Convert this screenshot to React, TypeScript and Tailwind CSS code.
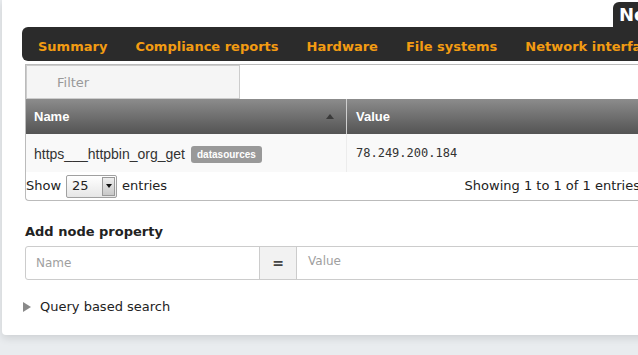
const tabs = ['Summary', 'Compliance reports', 'Hardware', 'File systems', 'Network interfaces', 'Software'];

function SortUp() {
  return (
    <svg width="8" height="5" viewBox="0 0 8 5" className="block">
      <polygon points="4,0 8,5 0,5" fill="#3a3a3a" />
    </svg>
  );
}

function PageSelect() {
  return (
    <div className="flex items-center h-[23px] w-[51px] border border-[#a0a0a0] bg-linear-to-b from-white to-[#e6e6e6] rounded-[2px]">
      <span className="pl-[5px] text-[13px] text-[#222] flex-1">25</span>
      <div className="w-[13px] h-[19px] mr-[1px] bg-linear-to-b from-[#eee] to-[#c8c8c8] border border-[#999] flex items-center justify-center">
        <svg width="6" height="4" viewBox="0 0 6 4">
          <polygon points="0,0 6,0 3,4" fill="#111" />
        </svg>
      </div>
    </div>
  );
}

export default function App() {
  return (
    <div className="w-[638px] h-[355px] overflow-hidden bg-[#e9ecef] font-['DejaVu_Sans',sans-serif] text-[#333]">
      <div className="ml-[2px] w-[900px] h-[335px] bg-white rounded-bl-[4px] shadow-[0_3px_8px_rgba(0,0,0,0.12)] pt-[2px]">
        {/* page title tab */}
        <div className="flex h-[25px]">
          <div className="ml-[611px] bg-[#2b2b2b] rounded-tl-[6px] pl-[6px] pr-3 text-white font-bold text-[18px] leading-[26px] whitespace-nowrap">
            Node properties
          </div>
        </div>

        {/* tabs bar */}
        <nav className="ml-[20px] h-[34px] bg-[#2b2b2b] rounded-l-[6px] flex items-center pl-[2px] pt-[6px]">
          {tabs.map((t) => (
            <span key={t} className="px-[14px] text-[13px] font-bold text-[#f39c12] whitespace-nowrap">
              {t}
            </span>
          ))}
        </nav>

        <div className="pl-[23px]">
          {/* properties table */}
          <div className="mt-[3px] w-[625px] border-t border-l border-b border-[#bbb] rounded-bl-[4px]">
            <div className="w-[214px] h-[34px] bg-[#f5f5f5] border border-[#ccc] flex items-center pl-[30px] pt-[1px] text-[13px] text-[#999]">
              Filter
            </div>

            <div className="flex h-[35px] bg-linear-to-b from-[#8c8c8c] to-[#545454] text-white font-['Liberation_Sans',sans-serif] font-bold text-[13px]">
              <div className="w-[321px] flex items-center justify-between pl-[8px] pr-[12px] border-r border-[#cfcfcf]">
                <span>Name</span>
                <SortUp />
              </div>
              <div className="flex-1 flex items-center pl-[9px]">Value</div>
            </div>

            <div className="flex h-[38px] bg-[#f9f9f9]">
              <div className="w-[321px] flex items-center gap-[6px] pl-[8px] pt-[2px] border-r border-[#ececec] font-['Liberation_Sans',sans-serif] text-[14px] text-[#333]">
                <span>https___httpbin_org_get</span>
                <span className="bg-[#999] text-white font-bold text-[10px] leading-[17px] px-[6px] rounded-[3px]">
                  datasources
                </span>
              </div>
              <div className="flex-1 flex items-center pl-[9px] font-['DejaVu_Sans_Mono',monospace] text-[12px] text-[#333]">
                78.249.200.184
              </div>
            </div>

            <div className="flex items-center h-[28px] text-[13px] text-[#222] pr-[10px]">
              <span>Show</span>
              <div className="mx-[5px]">
                <PageSelect />
              </div>
              <span>entries</span>
              <span className="ml-auto">Showing 1 to 1 of 1 entries</span>
            </div>
          </div>

          {/* add property form */}
          <h3 className="mt-[22px] text-[13px] font-bold leading-[18px] text-[#222]">Add node property</h3>
          <div className="mt-[5px] flex h-[34px] w-[700px] border border-[#ccc] rounded-l-[3px] text-[12px]">
            <div className="w-[233px] flex items-center pl-[10px] text-[#a0a0a0]">Name</div>
            <div className="w-[38px] flex items-center justify-center bg-[#f2f2f2] border-x border-[#ccc] font-bold text-[14px] text-[#444]">
              =
            </div>
            <div className="flex-1 flex items-start pt-[5px] pl-[11px] text-[#a0a0a0]">Value</div>
          </div>

          <div className="mt-[18px] -ml-[2px] flex items-center gap-[9px] h-[18px]">
            <svg width="8" height="10" viewBox="0 0 8 10">
              <polygon points="0,0 8,5 0,10" fill="#8a8a8a" />
            </svg>
            <span className="text-[13px] text-[#222]">Query based search</span>
          </div>
        </div>
      </div>
    </div>
  );
}
